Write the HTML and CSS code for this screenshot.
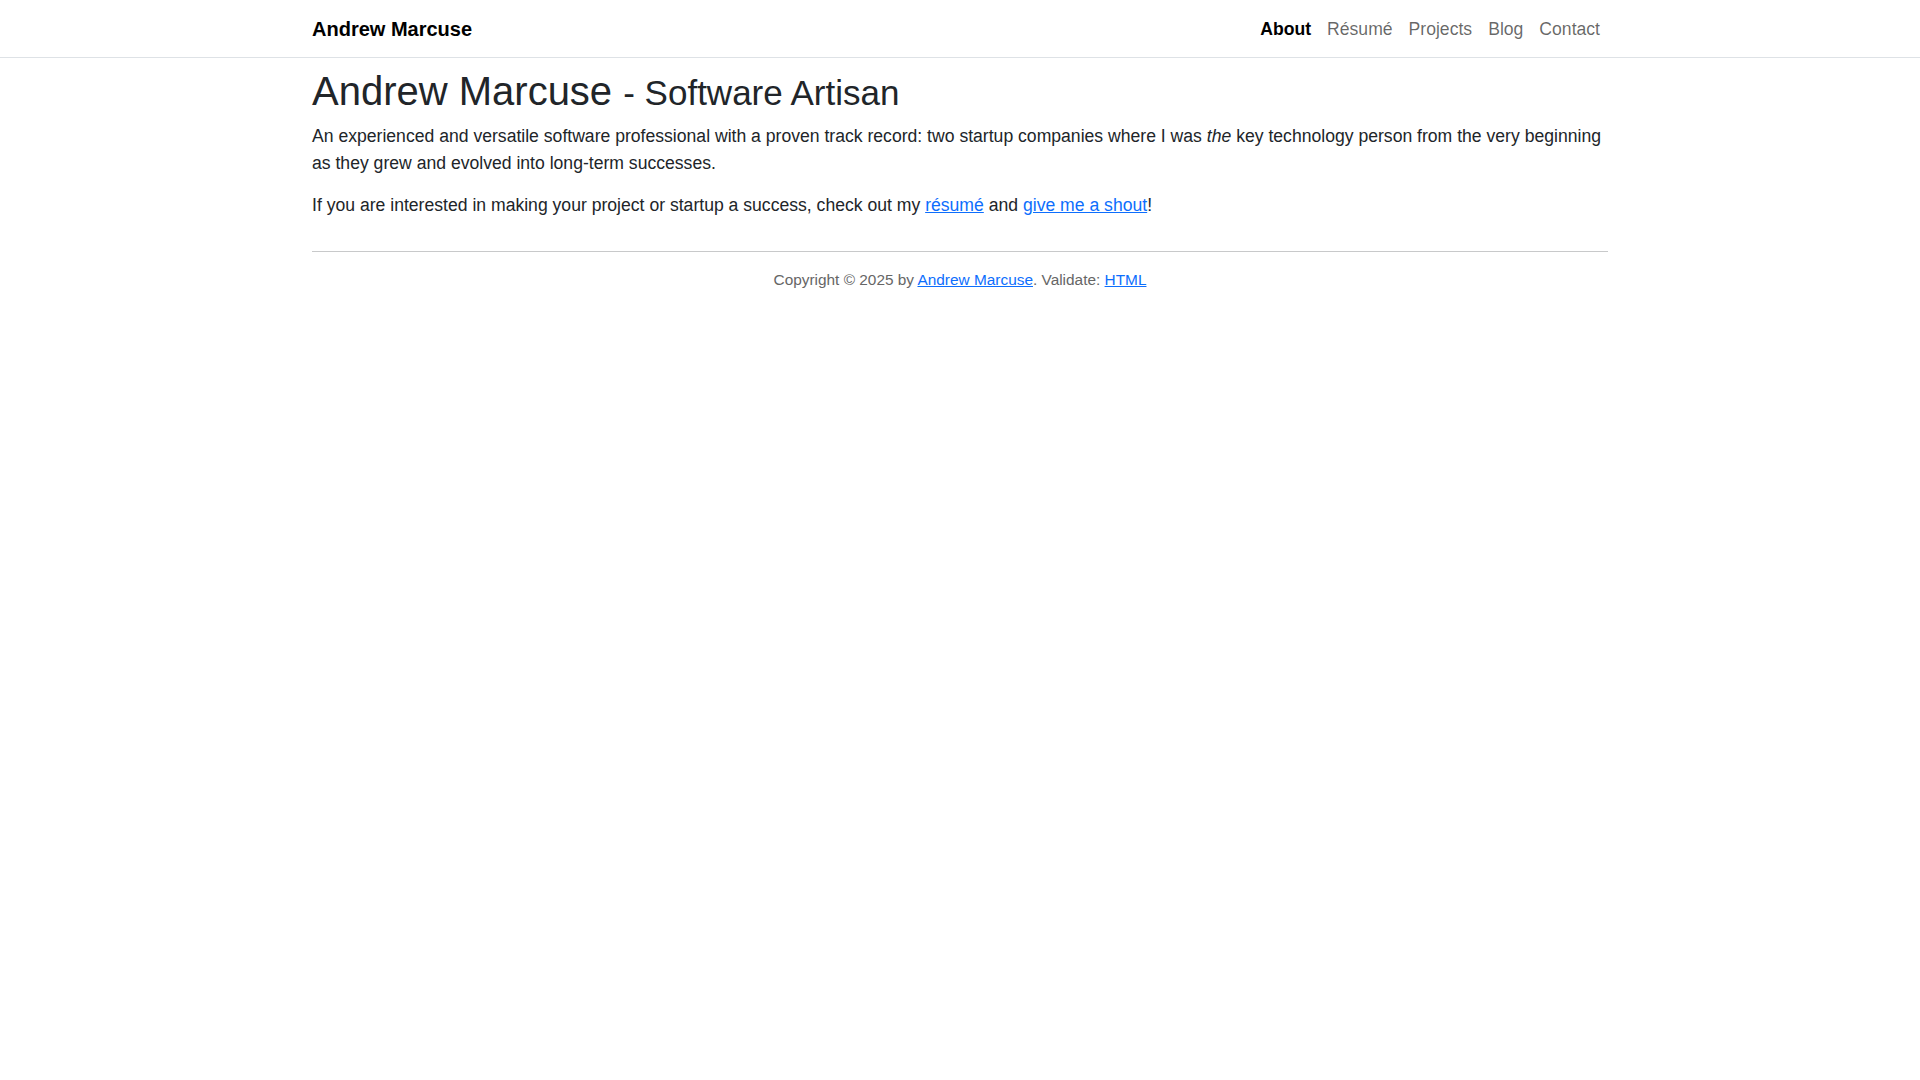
FILE: index.html
```html
<!DOCTYPE html>
<html lang="en">
<head>
<meta charset="utf-8">
<title>Andrew Marcuse - Software Artisan</title>
<link rel="stylesheet" href="styles.css">
</head>
<body>
<nav class="navbar">
  <div class="container nav-inner">
    <a class="brand" href="#">Andrew Marcuse</a>
    <ul class="nav-links">
      <li><a class="nav-link active" href="#">About</a></li>
      <li><a class="nav-link" href="#">Résumé</a></li>
      <li><a class="nav-link" href="#">Projects</a></li>
      <li><a class="nav-link" href="#">Blog</a></li>
      <li><a class="nav-link" href="#">Contact</a></li>
    </ul>
  </div>
</nav>
<main class="container main">
  <h1 class="title">Andrew Marcuse <small class="subtitle">- Software Artisan</small></h1>
  <p>An experienced and versatile software professional with a proven track record: two startup companies where I was <em>the</em> key technology person from the very beginning as they grew and evolved into long-term successes.</p>
  <p>If you are interested in making your project or startup a success, check out my <a href="#">résumé</a> and <a href="#">give me a shout</a>!</p>
  <footer class="footer">
    <hr class="rule">
    <p class="copyright">Copyright © 2025 by <a href="#">Andrew Marcuse</a>. Validate: <a href="#">HTML</a></p>
  </footer>
</main>
</body>
</html>
```
FILE: styles.css
```css
* { box-sizing: border-box; }
html, body { margin: 0; padding: 0; }
body {
  font-family: "Liberation Sans", Arial, sans-serif;
  font-size: 17.6px;
  line-height: 1.5;
  color: #212529;
  background: #fff;
}
.container {
  width: 1320px;
  margin: 0 auto;
  padding: 0 12px;
}
.navbar {
  border-bottom: 1px solid #dee2e6;
}
.nav-inner {
  height: 57px;
  display: flex;
  align-items: center;
  justify-content: space-between;
}
.brand {
  font-size: 20px;
  font-weight: bold;
  color: #000;
  text-decoration: none;
  line-height: 30px;
}
.nav-links {
  list-style: none;
  margin: 0;
  padding: 0;
  display: flex;
}
.nav-link {
  display: block;
  padding: 8px;
  color: rgba(0, 0, 0, 0.6);
  text-decoration: none;
  font-size: 17.6px;
  line-height: 26px;
}
.nav-link.active {
  color: #000;
  font-weight: bold;
}
.main {
  padding-top: 9px;
}
.title {
  font-size: 40px;
  font-weight: 400;
  line-height: 1.2;
  margin: 0 0 8px;
}
.subtitle {
  font-size: 0.875em;
}
p {
  margin: 0 0 15px;
  line-height: 27px;
}
a {
  color: #0d6efd;
}
.footer {
  margin-top: 32px;
}
.rule {
  border: 0;
  border-top: 1px solid #c8c9ca;
  margin: 0;
}
.copyright {
  text-align: center;
  font-size: 15.4px;
  line-height: 23px;
  color: #666;
  padding-top: 16px;
}
```
